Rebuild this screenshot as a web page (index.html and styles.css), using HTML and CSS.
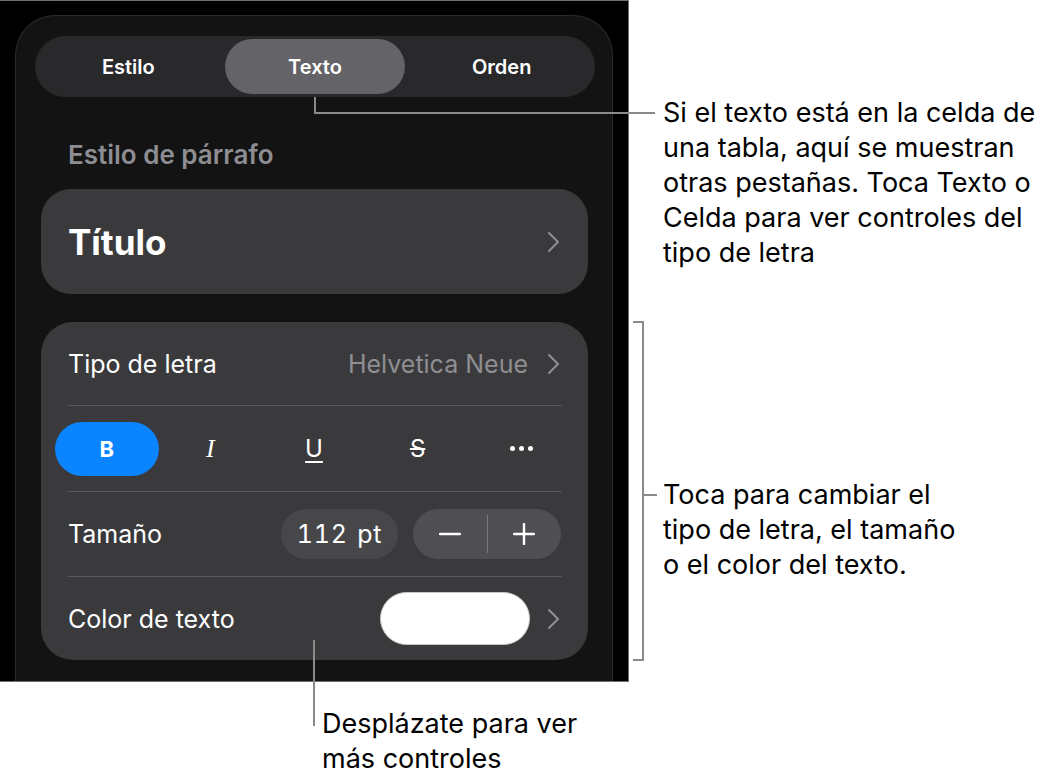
FILE: index.html
```html
<!DOCTYPE html>
<html lang="es">
<head>
<meta charset="utf-8">
<title>Texto</title>
<link rel="stylesheet" href="styles.css">
</head>
<body>
<div class="stage">
  <div class="frame">
    <div class="panel">
      <div class="segment">
        <div class="seg">Estilo</div>
        <div class="seg active">Texto</div>
        <div class="seg">Orden</div>
      </div>
      <div class="section-label">Estilo de párrafo</div>
      <div class="card title-card">
        <span class="title">Título</span>
        <svg class="chev" width="13" height="22" viewBox="0 0 13 22"><path d="M2 2 L11 11 L2 20" fill="none" stroke="#8e8e93" stroke-width="2" stroke-linecap="round" stroke-linejoin="round"/></svg>
      </div>
      <div class="card font-card">
        <div class="row row-font">
          <span class="label">Tipo de letra</span>
          <span class="value">Helvetica Neue</span>
          <svg class="chev" width="13" height="22" viewBox="0 0 13 22"><path d="M2 2 L11 11 L2 20" fill="none" stroke="#8e8e93" stroke-width="2" stroke-linecap="round" stroke-linejoin="round"/></svg>
        </div>
        <div class="divider"></div>
        <div class="row row-format">
          <div class="fmt active">B</div>
          <div class="fmt fmt-i">I</div>
          <div class="fmt fmt-u">U</div>
          <div class="fmt fmt-s">S</div>
          <div class="fmt fmt-more"><span class="dot"></span><span class="dot"></span><span class="dot"></span></div>
        </div>
        <div class="divider"></div>
        <div class="row row-size">
          <span class="label">Tamaño</span>
          <span class="size-value">112 pt</span>
          <div class="stepper">
            <div class="step"><svg width="22" height="22" viewBox="0 0 22 22"><path d="M1 11 H21" stroke="#fff" stroke-width="2.4" stroke-linecap="round"/></svg></div>
            <div class="step-sep"></div>
            <div class="step"><svg width="22" height="22" viewBox="0 0 22 22"><path d="M1 11 H21 M11 1 V21" stroke="#fff" stroke-width="2.4" stroke-linecap="round"/></svg></div>
          </div>
        </div>
        <div class="divider"></div>
        <div class="row row-color">
          <span class="label">Color de texto</span>
          <span class="swatch"></span>
          <svg class="chev" width="13" height="22" viewBox="0 0 13 22"><path d="M2 2 L11 11 L2 20" fill="none" stroke="#8e8e93" stroke-width="2" stroke-linecap="round" stroke-linejoin="round"/></svg>
        </div>
      </div>
    </div>
  </div>

  <svg class="callouts" width="1051" height="779" viewBox="0 0 1051 779">
    <path d="M315 97 V113 H655" fill="none" stroke="#8a8a8a" stroke-width="2"/>
    <path d="M633 322 H643 V660 H633 M643 495 H657" fill="none" stroke="#8a8a8a" stroke-width="2"/>
    <path d="M314 640 V726" fill="none" stroke="#8a8a8a" stroke-width="2"/>
  </svg>

  <p class="note note-tabs">Si el texto está en la celda de<br>una tabla, aquí se muestran<br>otras pestañas. Toca Texto o<br>Celda para ver controles del<br>tipo de letra</p>
  <p class="note note-font">Toca para cambiar el<br>tipo de letra, el tamaño<br>o el color del texto.</p>
  <p class="note note-scroll">Desplázate para ver<br>más controles</p>
</div>
</body>
</html>
```

FILE: styles.css
```css
body {
  margin: 0;
  background: #ffffff;
  font-family: Inter, "Noto Sans", sans-serif;
}

.stage {
  position: relative;
  width: 1051px;
  height: 779px;
  overflow: hidden;
}

.frame {
  width: 629px;
  height: 682px;
  box-sizing: border-box;
  background: #000;
  border: 1px solid #707070;
  border-left: none;
  padding: 14px 15px 0 15px;
  overflow: hidden;
}

.panel {
  height: 100%;
  box-sizing: border-box;
  background: #131313;
  border: 1px solid #2b2b2d;
  border-bottom: none;
  border-radius: 40px 40px 0 0;
  display: flex;
  flex-direction: column;
}

.segment {
  margin: 20px 17px 0 19px;
  height: 61px;
  box-sizing: border-box;
  padding: 3px;
  border-radius: 31px;
  background: #29292c;
  display: grid;
  grid-template-columns: repeat(3, 1fr);
  column-gap: 6px;
}

.seg {
  display: flex;
  align-items: center;
  justify-content: center;
  color: #fff;
  font-size: 20px;
  font-weight: 600;
  border-radius: 28px;
}

.seg.active {
  background: #636368;
}

.section-label {
  margin: 45px 0 0 52px;
  height: 26px;
  line-height: 26px;
  font-size: 26px;
  font-weight: 600;
  color: #8d8d92;
}

.card {
  margin: 0 24px 0 25px;
  background: #3a3a3c;
  border-radius: 32px;
}

.title-card {
  margin-top: 21px;
  height: 105px;
  box-sizing: border-box;
  padding: 0 28px 0 27px;
  display: flex;
  align-items: center;
  justify-content: space-between;
  border-radius: 30px;
}

.title {
  font-size: 35px;
  font-weight: 700;
  color: #fff;
}

.chev {
  display: block;
  flex: none;
}

.font-card {
  margin-top: 28px;
  display: flex;
  flex-direction: column;
}

.row {
  display: flex;
  align-items: center;
  padding: 0 28px 0 27px;
  box-sizing: border-box;
}

.label {
  font-size: 25px;
  color: #fff;
}

.divider {
  height: 1px;
  margin: 0 26px 0 27px;
  background: #58585c;
}

.row-font {
  height: 83px;
}

.value {
  margin-left: auto;
  margin-right: 19px;
  font-size: 25px;
  color: #8e8e93;
}

.row-format {
  height: 85px;
  padding: 0 15px 0 14px;
  display: grid;
  grid-template-columns: repeat(5, 1fr);
  align-items: center;
}

.fmt {
  height: 54px;
  display: flex;
  align-items: center;
  justify-content: center;
  border-radius: 27px;
  color: #fff;
  font-size: 24px;
}

.fmt.active {
  background: #0a84ff;
  font-weight: 700;
  font-size: 22px;
}

.fmt-i {
  font-family: "Liberation Serif", serif;
  font-style: italic;
  font-size: 26px;
}

.fmt-u {
  text-decoration: underline;
  text-decoration-thickness: 1.5px;
  text-underline-offset: 4px;
}

.fmt-s {
  text-decoration: line-through;
  text-decoration-thickness: 1.5px;
}

.fmt-more {
  gap: 4px;
}

.dot {
  width: 5px;
  height: 5px;
  border-radius: 50%;
  background: #fff;
}

.row-size {
  height: 84px;
  padding-right: 27px;
}

.size-value {
  margin-left: auto;
  width: 117px;
  height: 50px;
  border-radius: 25px;
  background: #47474a;
  color: #fff;
  font-size: 25px;
  letter-spacing: 0.8px;
  word-spacing: 2px;
  font-variant-numeric: tabular-nums;
  display: flex;
  align-items: center;
  justify-content: center;
}

.stepper {
  margin-left: 15px;
  width: 148px;
  height: 50px;
  border-radius: 25px;
  background: #4f4f53;
  display: flex;
  align-items: center;
}

.step {
  flex: 1;
  display: flex;
  align-items: center;
  justify-content: center;
}

.step svg {
  display: block;
}

.step-sep {
  width: 1px;
  height: 38px;
  background: #7a7a7e;
}

.row-color {
  height: 83px;
}

.swatch {
  margin-left: auto;
  margin-right: 17px;
  width: 150px;
  height: 53px;
  box-sizing: border-box;
  border-radius: 27px;
  background: #fff;
  border: 1.5px solid #c8c8c8;
}

.callouts {
  position: absolute;
  left: 0;
  top: 0;
  pointer-events: none;
}

.note {
  position: absolute;
  margin: 0;
  font-size: 27px;
  line-height: 35px;
  color: #000;
  white-space: nowrap;
}

.note-tabs {
  left: 663px;
  top: 95px;
}

.note-font {
  left: 663px;
  top: 477px;
}

.note-scroll {
  left: 322px;
  top: 706px;
}
```
